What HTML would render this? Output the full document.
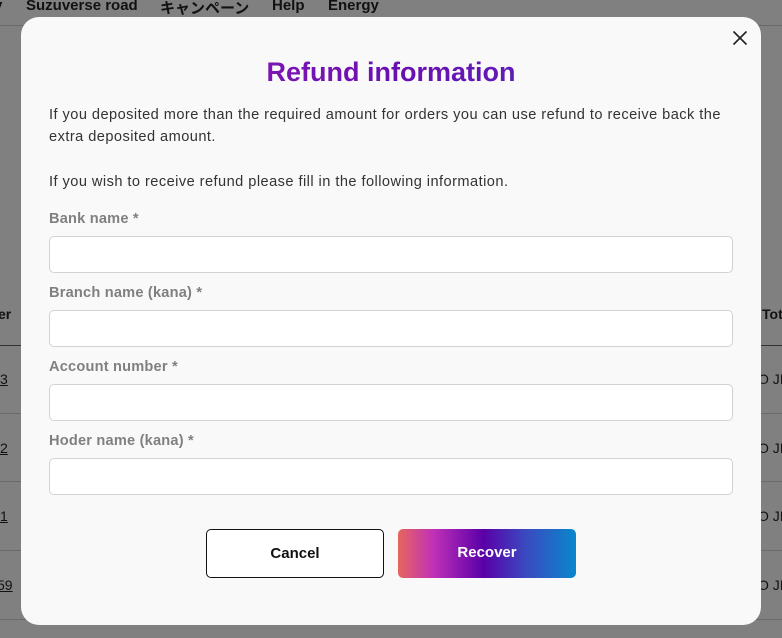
<!DOCTYPE html>
<html><head><meta charset="utf-8"><style>
*{box-sizing:border-box;margin:0;padding:0}
body{width:782px;height:638px;background:#808080;position:relative;overflow:hidden;font-family:"Liberation Sans","Noto Sans CJK JP",sans-serif;color:#111}
.nav{position:absolute;top:-3px;left:0;font-size:15px;font-weight:bold;color:#111;white-space:nowrap}
.nav span{position:absolute;top:0}
.hl{position:absolute;left:0;right:0;height:1px;background:#6a6a6a}
.side{position:absolute;font-size:14px;color:#111;white-space:nowrap}
.modal{position:absolute;left:21px;top:17px;width:740px;height:608px;background:#f9f9f9;border-radius:18px}
.x{position:absolute;left:711px;top:13px}
h1{position:absolute;top:40px;left:0;width:740px;text-align:center;font-size:27px;font-weight:bold;color:#7a1fb0;background:linear-gradient(90deg,#a020b8,#6a10b0,#4a30c0);-webkit-background-clip:text;background-clip:text;-webkit-text-fill-color:transparent}
p{position:absolute;left:28px;font-size:14.6px;line-height:22px;color:#333;width:700px;white-space:nowrap;letter-spacing:0.45px}
label{position:absolute;left:28px;font-size:14.6px;font-weight:bold;color:#808080;letter-spacing:0.2px}
.in{position:absolute;left:28px;width:684px;height:37px;background:#fff;border:1px solid #d2d2d2;border-radius:5px}
.btn{position:absolute;top:512px;width:178px;height:49px;border-radius:5px;font-size:15px;font-weight:bold;text-align:center;line-height:47px}
</style></head><body>
<div class="nav"><span style="left:-6px">y</span><span style="left:26px">Suzuverse road</span><span style="left:160px">キャンペーン</span><span style="left:272px">Help</span><span style="left:328px">Energy</span></div>
<div class="hl" style="top:25px"></div>
<div class="side" style="left:-2px;top:306px;font-weight:bold">er</div>
<div class="side" style="left:762px;top:306px;font-weight:bold">Tot</div>
<div class="hl" style="top:345px;background:#333"></div>
<div class="hl" style="top:413px"></div>
<div class="hl" style="top:481px"></div>
<div class="hl" style="top:550px"></div>
<div class="hl" style="top:619px"></div>
<div class="side" style="left:0;top:371px;text-decoration:underline">3</div>
<div class="side" style="left:0;top:440px;text-decoration:underline">2</div>
<div class="side" style="left:0;top:508px;text-decoration:underline">1</div>
<div class="side" style="left:-3px;top:577px;text-decoration:underline">59</div>
<div class="side" style="left:758px;top:371px">O JI</div>
<div class="side" style="left:758px;top:440px">O JI</div>
<div class="side" style="left:758px;top:508px">O JI</div>
<div class="side" style="left:758px;top:577px">O JI</div>
<div class="modal">
<svg class="x" width="16" height="16" viewBox="0 0 16 16"><path d="M1.5 1.5L14.5 14.5M14.5 1.5L1.5 14.5" stroke="#222" stroke-width="1.6"/></svg>
<h1>Refund information</h1>
<p style="top:87px">If you deposited more than the required amount for orders you can use refund to receive back the<br>extra deposited amount.</p>
<p style="top:154px">If you wish to receive refund please fill in the following information.</p>
<label style="top:194px">Bank name *</label><div class="in" style="top:219px"></div>
<label style="top:268px">Branch name (kana) *</label><div class="in" style="top:293px"></div>
<label style="top:342px">Account number *</label><div class="in" style="top:367px"></div>
<label style="top:416px">Hoder name (kana) *</label><div class="in" style="top:441px"></div>
<div class="btn" style="left:185px;border:1.5px solid #111;background:#fff;color:#111">Cancel</div>
<div class="btn" style="left:377px;color:#fff;background:linear-gradient(90deg,#e6665e 0%,#c030b8 20%,#5a00a8 48%,#3a4ac0 72%,#0888cc 100%)">Recover</div>
</div>
</body></html>
